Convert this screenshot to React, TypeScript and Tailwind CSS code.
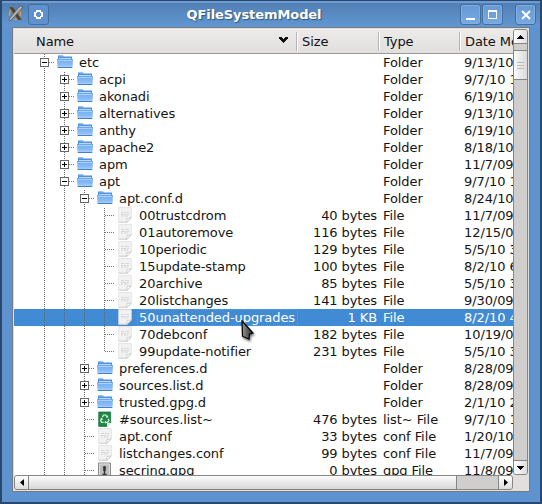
import React from 'react';

type Kind = 'folder' | 'file' | 'recycle' | 'key';
type Row = { n: string; d: number; k: Kind; s?: string; t: string; m: string; open?: boolean; last?: boolean };

const dir = (n: string, d: number, m: string, open = false): Row => ({ n, d, k: 'folder', t: 'Folder', m, open });
const file = (n: string, d: number, s: string, m: string, t = 'File', k: Kind = 'file'): Row => ({ n, d, k, s, t, m });

const rows: Row[] = [
  dir('etc', 1, '9/13/10 1:07', true),
  dir('acpi', 2, '9/7/10 11:20'),
  dir('akonadi', 2, '6/19/10 1:07'),
  dir('alternatives', 2, '9/13/10 1:07'),
  dir('anthy', 2, '6/19/10 1:07'),
  dir('apache2', 2, '8/18/10 1:07'),
  dir('apm', 2, '11/7/09 1:07'),
  dir('apt', 2, '9/7/10 11:20', true),
  dir('apt.conf.d', 3, '8/24/10 1:07', true),
  file('00trustcdrom', 4, '40 bytes', '11/7/09 1:07'),
  file('01autoremove', 4, '116 bytes', '12/15/09 1:07'),
  file('10periodic', 4, '129 bytes', '5/5/10 3:07'),
  file('15update-stamp', 4, '100 bytes', '8/2/10 6:07'),
  file('20archive', 4, '85 bytes', '5/5/10 3:07'),
  file('20listchanges', 4, '141 bytes', '9/30/09 1:07'),
  file('50unattended-upgrades', 4, '1 KB', '8/2/10 4:07'),
  file('70debconf', 4, '182 bytes', '10/19/09 1:07'),
  { ...file('99update-notifier', 4, '231 bytes', '5/5/10 3:07'), last: true },
  dir('preferences.d', 3, '8/28/09 1:07'),
  dir('sources.list.d', 3, '8/28/09 1:07'),
  dir('trusted.gpg.d', 3, '2/1/10 2:07'),
  file('#sources.list~', 3, '476 bytes', '9/7/10 11:20', 'list~ File', 'recycle'),
  file('apt.conf', 3, '33 bytes', '1/20/10 1:07', 'conf File'),
  file('listchanges.conf', 3, '99 bytes', '11/7/09 1:07', 'conf File'),
  file('secring.gpg', 3, '0 bytes', '11/8/09 1:07', 'gpg File', 'key'),
];

function Guide({ index, own, row }: { index: number; own: boolean; row: Row }) {
  const box = own && row.k === 'folder';
  const end = own && row.last ? 9 : 17;
  return (
    <svg className="h-[17px] w-5 shrink-0" width="20" height="17" shapeRendering="crispEdges">
      <path d={`M10.5 0V${end}`} stroke="#666" strokeDasharray="1 1" strokeDashoffset={index % 2} />
      {own && <path d="M11 8.5H20" stroke="#777" strokeDasharray="1 1" />}
      {box && (
        <>
          <rect x="6.5" y="4.5" width="8" height="8" fill="#fff" stroke="#666" />
          <path d="M8 8.5H13" stroke="#000" />
          {!row.open && <path d="M10.5 6V11" stroke="#000" />}
        </>
      )}
    </svg>
  );
}

function Icon({ kind }: { kind: Kind }) {
  if (kind === 'folder')
    return (
      <svg className="h-4 w-4 shrink-0" viewBox="0 0 16 16">
        <path d="M1 7V1.5h5l1 1h8V7z" fill="#4f91e2" />
        <path d="M2 2h3.6l1 1" stroke="#8bbbf3" fill="none" />
        <path d="M2 4.5h12" stroke="#b9d8fc" />
        <path d="M0 5h16l-.5 9H.5z" fill="url(#folderFill)" />
        <path d="M.5 5.5h15" stroke="#6ba5ec" />
        <path d="M1 6.5h14" stroke="#a9cffa" />
        <path d="M.8 13.5h14.4" stroke="#427fcd" />
      </svg>
    );
  if (kind === 'file')
    return (
      <svg className="h-4 w-4 shrink-0" viewBox="0 0 16 16">
        <path d="M1.7 .5h12.6v10.7L10 15.4H1.7z" fill="#f2f2f2" stroke="#e0e0e0" strokeWidth=".8" />
        <path d="M2 15.2h8" stroke="#cbcbcb" strokeWidth=".8" />
        <path d="M4 5.5h3m1 0h4M4 7.5h5m1 0h2M4 9h2m1 0h4" stroke="#d4d4d4" strokeWidth=".9" />
        <path d="M14.2 11l-4.4 4.3.2-3.8z" fill="#fff" stroke="#c0c0c0" strokeWidth=".7" />
      </svg>
    );
  if (kind === 'recycle')
    return (
      <svg className="h-4 w-4 shrink-0" viewBox="0 0 16 16">
        <path d="M1.7 1h12v10.5L10 15.4H1.7z" fill="#218746" stroke="#116d34" strokeWidth=".7" />
        <path d="M5.3 6.2L6.5 4h2.2l1.4 2M11 7.8l1 1.7-1.3 1.8H8.5M6.6 11.3H4.7L3.6 9.5l1-1.8" fill="none" stroke="#e0f5e5" strokeWidth="1.2" />
        <path d="M8.6 6.4h2.5V4zM9 9.7v3l-1.8-1.4zM3.1 8l2-1.3.9 2.2z" fill="#e0f5e5" />
        <path d="M13.8 11.7L10 15.4v-3.2z" fill="#f1fff3" />
      </svg>
    );
  return (
    <svg className="h-4 w-4 shrink-0" viewBox="0 0 16 16">
      <path d="M1.5 1h12v14h-12z" fill="#bdbdbd" stroke="#888" />
      <path d="M2.5 2h10v12h-10z" fill="none" stroke="#dedede" />
      <circle cx="7.5" cy="5.5" r="1.6" fill="#333" />
      <path d="M7.5 5v7M6 8h3M5.5 12.5h4" stroke="#333" strokeWidth="1.4" />
    </svg>
  );
}

function TreeRow({ row, index }: { row: Row; index: number }) {
  const selected = row.n === '50unattended-upgrades';
  return (
    <div className={`flex h-[17px] w-[620px] shrink-0 whitespace-nowrap leading-[17px] ${selected ? 'bg-[#418bd4] text-white' : 'text-[#141414]'}`}>
      <div className="flex w-[283px] shrink-0">
        <div className="w-5 shrink-0" />
        {Array.from({ length: row.d }, (_, i) => (
          <Guide key={i} index={index} own={i === row.d - 1} row={row} />
        ))}
        <div className="flex pl-[3px]">
          <Icon kind={row.k} />
          <span className={`ml-1 h-[17px] border border-dotted px-px leading-[15px] ${selected ? 'w-[161px] border-[#8b929c]' : 'border-transparent'}`}>{row.n}</span>
        </div>
      </div>
      <span className="w-[80px] shrink-0 text-right">{row.s}</span>
      <span className="w-[81px] shrink-0 pl-1.5">{row.t}</span>
      <span className="pl-1.5">{row.m}</span>
    </div>
  );
}

const titleButton = 'flex h-[21px] w-[21px] items-center justify-center rounded-[3px] border border-[#416f9f] bg-linear-to-b from-[#6699d5] to-[#79a9e1] shadow-[inset_0_0_0_1px_#82ade0]';

export default function App() {
  return (
    <div className="relative flex h-[504px] w-[542px] flex-col overflow-hidden border-2 border-t-1 border-[#29486c] bg-[#5e93cf] font-['DejaVu_Sans',sans-serif] text-[13px] tracking-[-0.08px]">
      <svg className="absolute h-0 w-0">
        <defs>
          <linearGradient id="folderFill" x2="0" y2="1">
            <stop stopColor="#72aaf0" />
            <stop offset=".65" stopColor="#8abcf6" />
            <stop offset="1" stopColor="#b5dafe" />
          </linearGradient>
        </defs>
      </svg>
      <header className="flex h-[26px] shrink-0 items-start border-t-2 border-[#6e9bd1] bg-linear-to-b from-[#517fb3] to-[#6297d3] pl-1.5 pr-1 pt-px">
        <svg className="mt-0.5" width="16" height="16" viewBox="0 0 16 16">
          <circle cx="7" cy="8" r="5.5" fill="none" stroke="#d69a4d" strokeWidth="1.5" strokeDasharray="9 6" />
          <path d="M1 1h4l9 13h-4z" fill="#48443c" stroke="#77736b" strokeWidth=".6" />
          <path d="M12 0l3 1-9 10-4 4-1-2z" fill="#bab5a6" stroke="#555249" strokeWidth=".7" />
        </svg>
        <div className="ml-1 flex h-[21px] w-[21px] items-center justify-center rounded-[3px] border border-[#416f9f] bg-[#6091cf]">
          <svg width="9" height="9" viewBox="0 0 9 9" shapeRendering="crispEdges">
            <path d="M2 0h5v2h2v5H7v2H2V7H0V2h2zM3 2v1H2v3h1v1h3V6h1V3H6V2z" fill="white" fillRule="evenodd" />
          </svg>
        </div>
        <h1 className="flex-1 pr-[1px] text-center font-bold leading-[22px] text-white [text-shadow:1px_1px_1px_#345474]">QFileSystemModel</h1>
        <div className="flex">
          <div className={titleButton}><i className="mt-2 h-0.5 w-[9px] bg-white" /></div>
          <div className={`ml-px ${titleButton}`}><i className="h-[9px] w-[9px] border border-t-2 border-white" /></div>
          <div className={`ml-3 ${titleButton}`}><svg width="10" height="10"><path d="M1 1l8 8M9 1L1 9" stroke="white" strokeWidth="2" /></svg></div>
        </div>
      </header>
      <main className="mx-[10px] flex h-[465px] w-[518px] flex-col overflow-hidden border border-[#777b80] bg-[#e2e0df] p-px">
        <div className="flex h-[446px] shrink-0">
          <div className="flex w-[499px] flex-col overflow-hidden bg-white">
            <div className="flex h-[25px] w-[620px] shrink-0 items-center border-b border-[#999] bg-linear-to-b from-[#ecebea] to-[#e2e0de] pt-px text-[#111]">
              <div className="flex h-[19px] w-[283px] items-center justify-between border-r border-[#b7b5b3] pl-[22px] pr-2">Name<svg width="9" height="6" className="mb-[3px]" shapeRendering="crispEdges"><path d="M0 0h3v1h1v1h1V1h1V0h3v2H8v1H7v1H6v1H5v1H4V5H3V4H2V3H1V2H0z" fill="#111" /></svg></div>
              <div className="flex h-[19px] w-[82px] items-center border-l border-r border-l-white border-r-[#b7b5b3] pl-1">Size</div>
              <div className="flex h-[19px] w-[81px] items-center border-l border-r border-l-white border-r-[#b7b5b3] pl-1">Type</div>
              <div className="flex h-[19px] items-center border-l border-white pl-1">Date Modified</div>
            </div>
            <div className="flex min-h-0 flex-col overflow-hidden">
              {rows.map((row, i) => <TreeRow key={row.n} row={row} index={i} />)}
            </div>
          </div>
          <div className="flex w-[15px] shrink-0 flex-col overflow-hidden rounded-[3px] border border-[#858585] bg-[#cfcecd]">
            <div className="flex h-[14px] items-center justify-center border-b border-[#858585] bg-linear-to-r from-white to-[#ddd]"><svg width="7" height="4" shapeRendering="crispEdges"><path d="M3 0h1v1h1v1h1v1h1v1H0V3h1V2h1V1h1z" /></svg></div>
            <div className="mt-[6px] flex h-[30px] flex-col items-center justify-center gap-0.5 border-y border-[#858585] bg-linear-to-r from-[#fafafa] to-[#d9d9d9]">
              <i className="h-px w-[7px] bg-[#bbb]" /><i className="h-px w-[7px] bg-[#bbb]" /><i className="h-px w-[7px] bg-[#bbb]" />
            </div>
            <div className="mt-auto flex h-[14px] items-center justify-center border-t border-[#858585] bg-linear-to-r from-white to-[#ddd]"><svg width="7" height="4" shapeRendering="crispEdges"><path d="M0 0h7v1H6v1H5v1H4v1H3V3H2V2H1V1H0z" /></svg></div>
          </div>
        </div>
        <div className="flex h-[15px] w-[499px] shrink-0 overflow-hidden rounded-[3px] border border-[#858585] bg-[#cfcecd]">
          <div className="flex w-[14px] items-center justify-center border-r border-[#858585] bg-linear-to-b from-white to-[#ddd]"><svg width="4" height="7"><path d="M4 0v7L0 3.5z" /></svg></div>
          <div className="w-[428px] border-r border-[#858585] bg-linear-to-b from-[#fcfcfc] to-[#d8d8d8]" />
          <div className="ml-auto flex w-[14px] items-center justify-center border-l border-[#858585] bg-linear-to-b from-white to-[#ddd]"><svg width="4" height="7"><path d="M0 0v7l4-3.5z" /></svg></div>
        </div>
      </main>
      <svg className="absolute left-[239px] top-[319px] drop-shadow-[1px_2px_1px_rgba(0,0,0,.5)]" width="15" height="22" viewBox="0 0 15 22">
        <defs><linearGradient id="pointer"><stop stopColor="#999" /><stop offset="1" stopColor="#222" /></linearGradient></defs>
        <path d="M1 1l11 12-3.5 1.2-.5 5-6.5-3z" fill="url(#pointer)" stroke="#000" strokeWidth="1.2" />
      </svg>
    </div>
  );
}
